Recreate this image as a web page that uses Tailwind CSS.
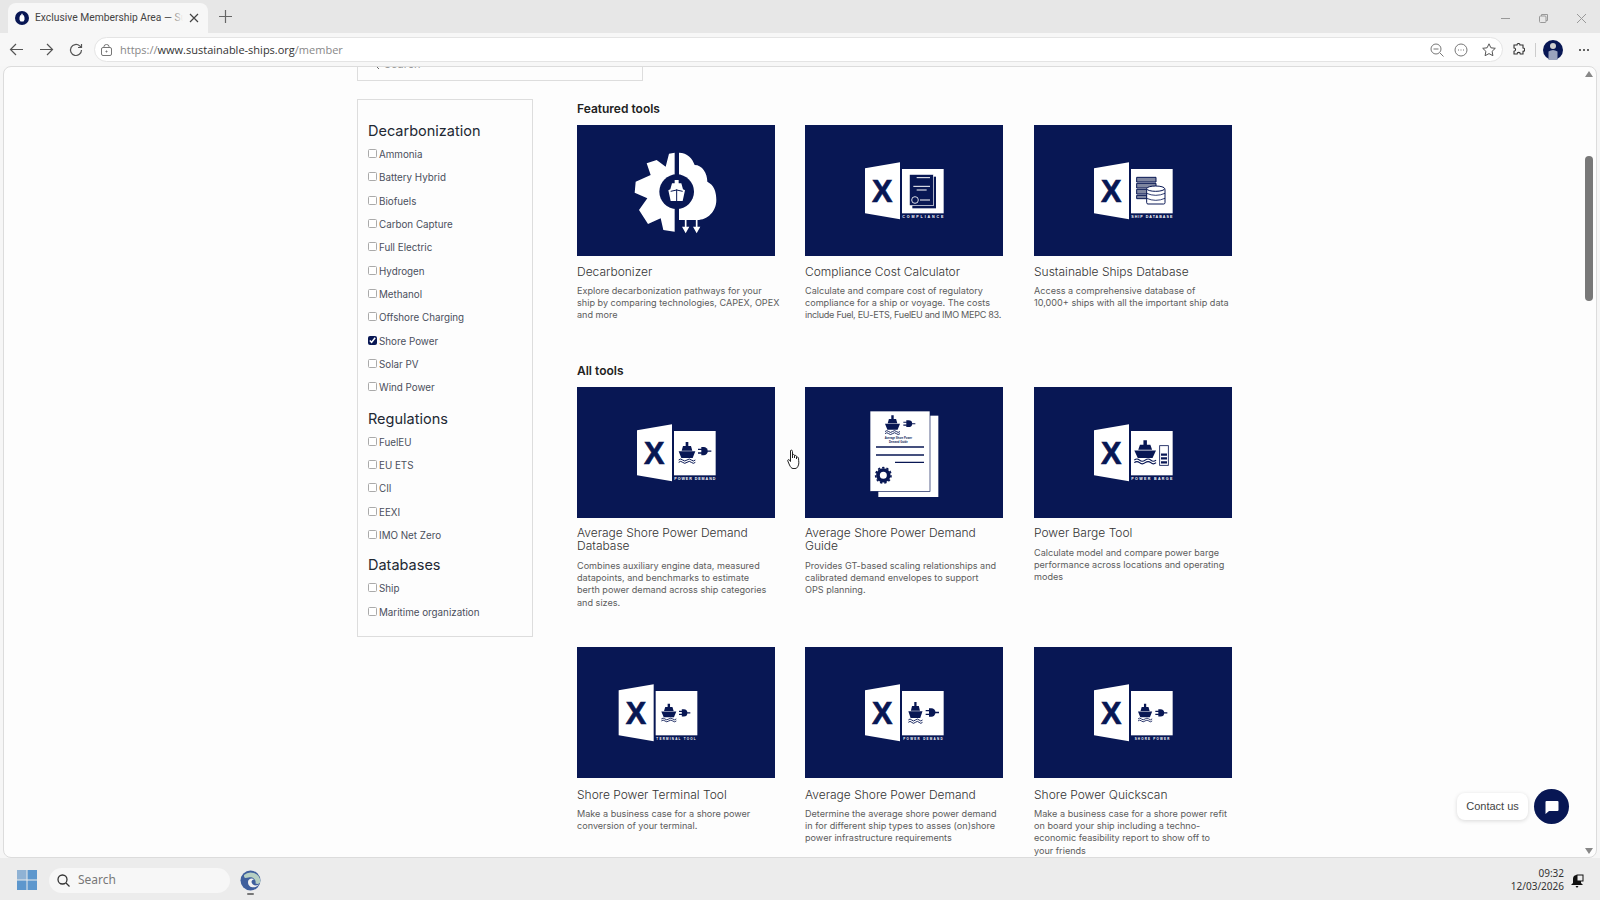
<!DOCTYPE html>
<html lang="en">
<head>
  <meta charset="UTF-8">
  <meta name="viewport" content="width=device-width, initial-scale=1.0">
  <title>Exclusive Membership Area</title>
  <script src="https://cdn.jsdelivr.net/npm/@tailwindcss/browser@4"></script>
</head>
<body class="w-[1600px] h-[900px] overflow-hidden bg-[#f6f6f6] font-['Open_Sans',sans-serif]">

  <!-- shared artwork for the tool tiles -->
  <svg class="hidden" width="0" height="0">
    <defs>
      <g id="xl">
        <path fill="#fff" d="M180 130 285 112V283L180 265Z"/>
        <rect fill="#fff" x="291" y="132" width="125" height="133"/>
        <text x="232" y="231" text-anchor="middle" font-family="Liberation Sans" font-weight="700" font-size="92" fill="#081754" stroke="#081754" stroke-width="2">X</text>
      </g>
      <g id="ship">
        <path fill="currentColor" d="M21 0h8v12h-8zM13 12h24l4 14H9zM0 28h50l-8 20H8z"/>
        <path fill="none" stroke="currentColor" stroke-width="3" d="M0 54q6-6 12 0t13 0 13 0 12 0M0 61q6-6 12 0t13 0 13 0 12 0"/>
      </g>
      <g id="plug">
        <path fill="none" stroke="currentColor" stroke-width="4" d="M0 7h12M0 18h12M28 12.500h12"/>
        <path fill="currentColor" d="M10 0h7a12.500 12.500 0 0 1 0 25h-7z"/>
      </g>
    </defs>
  </svg>

  <div class="flex flex-col h-[900px]">

    <!-- Tab strip -->
    <div class="h-[33px] bg-[#e7e7e7] flex items-end relative shrink-0">
      <div class="ml-[8px] w-[200px] h-[30px] bg-[#f7f7f7] rounded-t-lg flex items-center pl-[7px] pr-[9px] gap-[6px]">
        <svg class="w-[14px] h-[14px] shrink-0" viewBox="0 0 14 14"><circle cx="7" cy="7" r="7" fill="#081754"/><path fill="#fff" d="M6.300 2.800h1.400v1.400h1.100l.7 2.200v2.300l-1 1.800H5.500l-1-1.800V6.400l.7-2.200h1.100z"/></svg>
        <div class="relative w-[151px] overflow-hidden whitespace-nowrap font-['Roboto',sans-serif] text-[10.300px] leading-[16px] text-[#444]">Exclusive Membership Area — Sustainable Ships
          <div class="absolute inset-y-0 right-0 w-[14px] bg-gradient-to-r from-[#f7f7f7]/0 to-[#f7f7f7]"></div>
        </div>
        <svg class="w-[10px] h-[10px] shrink-0" viewBox="0 0 10 10" fill="none" stroke="#444" stroke-width="1.200"><path d="M1 1l8 8M9 1l-8 8"/></svg>
      </div>
      <svg class="w-[13px] h-[13px] ml-[11px] mb-[10px]" viewBox="0 0 13 13" fill="none" stroke="#666" stroke-width="1.200"><path d="M6.500 0v13M0 6.500h13"/></svg>
      <div class="ml-auto flex items-center gap-[29px] pr-[14px] mb-[10px]">
        <svg class="w-[9px] h-[9px]" viewBox="0 0 9 9" stroke="#999" fill="none"><path d="M0 4.500h9"/></svg>
        <svg class="w-[9px] h-[9px]" viewBox="0 0 9 9" stroke="#999" fill="none"><rect x=".5" y="2" width="6.500" height="6.500" rx="1"/><path d="M2.500 2V.5h6v6H7"/></svg>
        <svg class="w-[9px] h-[9px]" viewBox="0 0 9 9" stroke="#999" fill="none"><path d="M0 0l9 9M9 0L0 9"/></svg>
      </div>
    </div>

    <!-- Address bar row -->
    <div class="h-[33px] flex items-center shrink-0 bg-[#f7f7f7]">
      <svg class="w-[15px] h-[15px] ml-[9px]" viewBox="0 0 15 15" fill="none" stroke="#555" stroke-width="1.200"><path d="M14 7.500H1.500M7 2 1.500 7.500 7 13"/></svg>
      <svg class="w-[15px] h-[15px] ml-[15px]" viewBox="0 0 15 15" fill="none" stroke="#555" stroke-width="1.200"><path d="M1 7.500h12.500M8 2l5.500 5.500L8 13"/></svg>
      <svg class="w-[14px] h-[14px] ml-[15px]" viewBox="0 0 14 14" fill="none" stroke="#555" stroke-width="1.200"><path d="M12.500 7A5.500 5.500 0 1 1 10.700 2.900L12.500 4.500M12.500 1v3.500H9"/></svg>
      <div class="ml-[11px] w-[1409px] h-[25px] bg-white rounded-full border border-[#e4e4e4] flex items-center pl-[6px] pr-[6px]">
        <svg class="w-[11px] h-[12px] shrink-0" viewBox="0 0 11 12" fill="none" stroke="#777"><rect x=".5" y="3.500" width="10" height="8" rx="1.500"/><path d="M3 3.500V2.500a2.500 2 0 0 1 5 0v1"/><circle cx="5.500" cy="7.500" r=".6" fill="#777"/></svg>
        <div class="ml-[8px] text-[11px] leading-[16px] text-[#888] whitespace-nowrap">https://<span class="text-[#333]">www.sustainable-ships.org</span>/member</div>
        <div class="ml-auto flex items-center">
          <svg class="w-[14px] h-[14px]" viewBox="0 0 14 14" fill="none" stroke="#777"><circle cx="6" cy="6" r="5"/><path d="M3.500 6h5M10 10l3.500 3.500"/></svg>
          <svg class="w-[14px] h-[14px] ml-[10px]" viewBox="0 0 14 14" fill="none" stroke="#777"><circle cx="7" cy="7" r="6"/><path d="M4 7h1M6.500 7h1M9 7h1"/></svg>
          <svg class="w-[14px] h-[14px] ml-[14px]" viewBox="0 0 14 14" fill="none" stroke="#555"><path d="M7 .8l1.900 4 4.400.5-3.200 3 .8 4.400L7 10.600l-3.900 2.100.8-4.400-3.200-3 4.400-.5z"/></svg>
        </div>
      </div>
      <svg class="w-[13px] h-[13px] ml-[9px]" viewBox="0 0 13 13" fill="none" stroke="#333" stroke-width="1.100"><path d="M5 2a1.500 1.500 0 0 1 3 0h3v3a1.700 1.700 0 0 1 0 3.400V11H8.300a1.600 1.600 0 0 0-3.200 0H2V8.200a1.600 1.600 0 0 0 0-3.200V2z"/></svg>
      <div class="ml-[10px] w-px h-[14px] bg-[#ccc]"></div>
      <svg class="w-[20px] h-[20px] ml-[7px]" viewBox="0 0 20 20"><circle cx="10" cy="10" r="10" fill="#081754"/><circle cx="10" cy="6" r="3" fill="#cfcfcf"/><path fill="#9aa3bd" d="M5.500 20V11.500q4.500-3 9 0V20z"/></svg>
      <div class="ml-[16px] flex gap-[2px]">
        <div class="w-[2px] h-[2px] rounded-full bg-[#333]"></div><div class="w-[2px] h-[2px] rounded-full bg-[#333]"></div><div class="w-[2px] h-[2px] rounded-full bg-[#333]"></div>
      </div>
    </div>

    <!-- Page viewport -->
    <div class="h-[792px] shrink-0 mx-[3px] flex border border-[#dcdcdc] rounded-lg bg-[#fdfdfd] overflow-hidden relative font-['Inter',sans-serif]">
      <div class="flex-1 overflow-hidden pl-[353px]">
        <div class="-mt-[20px] w-[286px] h-[34px] border border-[#ddd] flex items-center pl-[12px] gap-[5px] text-[11px] text-[#999]">
          <svg class="w-[9px] h-[9px]" viewBox="0 0 9 9" fill="none" stroke="#666"><circle cx="3.500" cy="3.500" r="3"/><path d="M6 6l3 3"/></svg>
          Search
        </div>

        <div class="flex mt-[18px] items-start">
          <!-- Filters -->
          <div class="w-[176px] h-[538px] shrink-0 border border-[#ddd] pl-[10px] pt-[22px] text-[#4a4f5c]">
            <h2 class="text-[14.500px] leading-[18px] text-[#222833]">Decarbonization</h2>
            <div class="mt-[3px] flex flex-col text-[9.800px] leading-[23.330px]">
              <label class="flex items-center gap-[2px]"><input type="checkbox" class="appearance-none w-[9px] h-[9px] mb-[2px] bg-white border border-[#aaa] rounded-[1.500px]">Ammonia</label>
              <label class="flex items-center gap-[2px]"><input type="checkbox" class="appearance-none w-[9px] h-[9px] mb-[2px] bg-white border border-[#aaa] rounded-[1.500px]">Battery Hybrid</label>
              <label class="flex items-center gap-[2px]"><input type="checkbox" class="appearance-none w-[9px] h-[9px] mb-[2px] bg-white border border-[#aaa] rounded-[1.500px]">Biofuels</label>
              <label class="flex items-center gap-[2px]"><input type="checkbox" class="appearance-none w-[9px] h-[9px] mb-[2px] bg-white border border-[#aaa] rounded-[1.500px]">Carbon Capture</label>
              <label class="flex items-center gap-[2px]"><input type="checkbox" class="appearance-none w-[9px] h-[9px] mb-[2px] bg-white border border-[#aaa] rounded-[1.500px]">Full Electric</label>
              <label class="flex items-center gap-[2px]"><input type="checkbox" class="appearance-none w-[9px] h-[9px] mb-[2px] bg-white border border-[#aaa] rounded-[1.500px]">Hydrogen</label>
              <label class="flex items-center gap-[2px]"><input type="checkbox" class="appearance-none w-[9px] h-[9px] mb-[2px] bg-white border border-[#aaa] rounded-[1.500px]">Methanol</label>
              <label class="flex items-center gap-[2px]"><input type="checkbox" class="appearance-none w-[9px] h-[9px] mb-[2px] bg-white border border-[#aaa] rounded-[1.500px]">Offshore Charging</label>
              <label class="flex items-center gap-[2px]"><input type="checkbox" checked class="w-[9px] h-[9px] m-0 mb-[2px] accent-[#081754]">Shore Power</label>
              <label class="flex items-center gap-[2px]"><input type="checkbox" class="appearance-none w-[9px] h-[9px] mb-[2px] bg-white border border-[#aaa] rounded-[1.500px]">Solar PV</label>
              <label class="flex items-center gap-[2px]"><input type="checkbox" class="appearance-none w-[9px] h-[9px] mb-[2px] bg-white border border-[#aaa] rounded-[1.500px]">Wind Power</label>
            </div>
            <h2 class="mt-[10px] text-[14.500px] leading-[18px] text-[#222833]">Regulations</h2>
            <div class="mt-[3px] flex flex-col text-[9.800px] leading-[23.330px]">
              <label class="flex items-center gap-[2px]"><input type="checkbox" class="appearance-none w-[9px] h-[9px] mb-[2px] bg-white border border-[#aaa] rounded-[1.500px]">FuelEU</label>
              <label class="flex items-center gap-[2px]"><input type="checkbox" class="appearance-none w-[9px] h-[9px] mb-[2px] bg-white border border-[#aaa] rounded-[1.500px]">EU ETS</label>
              <label class="flex items-center gap-[2px]"><input type="checkbox" class="appearance-none w-[9px] h-[9px] mb-[2px] bg-white border border-[#aaa] rounded-[1.500px]">CII</label>
              <label class="flex items-center gap-[2px]"><input type="checkbox" class="appearance-none w-[9px] h-[9px] mb-[2px] bg-white border border-[#aaa] rounded-[1.500px]">EEXI</label>
              <label class="flex items-center gap-[2px]"><input type="checkbox" class="appearance-none w-[9px] h-[9px] mb-[2px] bg-white border border-[#aaa] rounded-[1.500px]">IMO Net Zero</label>
            </div>
            <h2 class="mt-[9px] text-[14.500px] leading-[18px] text-[#222833]">Databases</h2>
            <div class="mt-[3px] flex flex-col text-[9.800px] leading-[23.330px]">
              <label class="flex items-center gap-[2px]"><input type="checkbox" class="appearance-none w-[9px] h-[9px] mb-[2px] bg-white border border-[#aaa] rounded-[1.500px]">Ship</label>
              <label class="flex items-center gap-[2px]"><input type="checkbox" class="appearance-none w-[9px] h-[9px] mb-[2px] bg-white border border-[#aaa] rounded-[1.500px]">Maritime organization</label>
            </div>
          </div>

          <!-- Tools -->
          <div class="ml-[44px] w-[656px] pt-[1px]">
            <h3 class="text-[12px] leading-[18px] font-semibold text-[#222]">Featured tools</h3>
            <div class="mt-[7px] grid grid-cols-[198px_199px_198px] gap-x-[30px] h-[196px] mb-[41px]">
              <div>
                <svg class="w-[198px] h-[131px] bg-[#081754] block" viewBox="20 15 592 393">
                  <path fill="#fff" d="M312 98 295 101 285 140 258 120 228 130 240 165 195 185 192 218 230 235 205 270 232 312 270 295 278 330 312 335Z"/>
                  <path fill="#fff" d="M325 98C350 98 365 115 372 135 395 135 410 160 410 185 430 195 437 215 437 240 437 275 410 300 380 300H325Z"/>
                  <circle cx="318" cy="215" r="52" fill="#081754"/>
                  <path fill="#fff" d="M312 180h12v10h8l5 18 6 3-7 32h-36l-7-32 6-3 5-18h8z"/>
                  <path fill="none" stroke="#081754" stroke-width="3" d="M300 214q18-8 36 0M318 208V243"/>
                  <path fill="none" stroke="#fff" stroke-width="5" d="M345 298V325M378 298V325"/>
                  <path fill="#fff" d="M334 320h22l-11 20zM367 320h22l-11 20z"/>
                </svg>
                <h4 class="mt-[9px] text-[12px] font-light leading-[13px] text-[#333]">Decarbonizer</h4>
                <p class="mt-[7px] text-[9.100px] leading-[12px] whitespace-nowrap text-[#5c5c5c]">Explore decarbonization pathways for your<br>ship by comparing technologies, CAPEX, OPEX<br>and more</p>
              </div>
              <div>
                <svg class="w-[198px] h-[131px] bg-[#081754] block" viewBox="0 0 594 393">
                  <use href="#xl"/>
                  <rect x="322" y="155" width="71" height="95" fill="#081754"/>
                  <rect x="313" y="148" width="72" height="94" fill="#081754" stroke="#fff" stroke-width="2"/>
                  <path stroke="#fff" stroke-width="3" fill="none" d="M335 158h40M325 184h50M335 195h30M345 225h30"/>
                  <circle cx="330" cy="225" r="10" fill="none" stroke="#fff" stroke-width="2.500"/>
                  <text x="292" y="280" textLength="123" font-family="Liberation Sans" font-weight="700" font-size="11" fill="#fff">COMPLIANCE</text>
                </svg>
                <h4 class="mt-[9px] text-[12px] font-light leading-[13px] text-[#333]">Compliance Cost Calculator</h4>
                <p class="mt-[7px] text-[9.100px] leading-[12px] whitespace-nowrap text-[#5c5c5c]">Calculate and compare cost of regulatory<br>compliance for a ship or voyage. The costs<br><span class="tracking-[-0.3px]">include Fuel, EU-ETS, FuelEU and IMO MEPC 83.</span></p>
              </div>
              <div>
                <svg class="w-[198px] h-[131px] bg-[#081754] block" viewBox="0 0 594 393">
                  <use href="#xl"/>
                  <path fill="#7f86a0" stroke="#081754" stroke-width="3" d="M308 157h58v14h-58zM308 175h58v14h-58zM308 193h40v14h-40zM308 211h30v10h-30z"/>
                  <rect x="338" y="190" width="55" height="47" rx="4" fill="#fff" stroke="#081754" stroke-width="3"/>
                  <ellipse cx="365" cy="191" rx="27" ry="8" fill="#fff" stroke="#081754" stroke-width="3"/>
                  <path stroke="#081754" stroke-width="2.500" fill="none" d="M338 205q27 12 55 0M338 220q27 12 55 0"/>
                  <text x="292" y="280" textLength="123" font-family="Liberation Sans" font-weight="700" font-size="11" fill="#fff">SHIP DATABASE</text>
                </svg>
                <h4 class="mt-[9px] text-[12px] font-light leading-[13px] text-[#333]">Sustainable Ships Database</h4>
                <p class="mt-[7px] text-[9.100px] leading-[12px] whitespace-nowrap text-[#5c5c5c]">Access a comprehensive database of<br>10,000+ ships with all the important ship data</p>
              </div>
            </div>

            <h3 class="text-[12px] leading-[18px] font-semibold text-[#222]">All tools</h3>
            <div class="mt-[7px] grid grid-cols-[198px_199px_198px] gap-x-[30px] gap-y-[39px] grid-rows-[221px_auto]">
              <div>
                <svg class="w-[198px] h-[131px] bg-[#081754] block" viewBox="0 0 594 393">
                  <use href="#xl"/>
                  <use href="#ship" transform="translate(305 165)" class="text-[#081754]"/>
                  <use href="#plug" transform="translate(363 180)" class="text-[#081754]"/>
                  <text x="292" y="280" textLength="123" font-family="Liberation Sans" font-weight="700" font-size="11" fill="#fff">POWER DEMAND</text>
                </svg>
                <h4 class="mt-[8px] text-[12px] font-light leading-[13px] text-[#333]">Average Shore Power Demand<br>Database</h4>
                <p class="mt-[8px] text-[9.100px] leading-[12.200px] whitespace-nowrap text-[#5c5c5c]">Combines auxiliary engine data, measured<br>datapoints, and benchmarks to estimate<br>berth power demand across ship categories<br>and sizes.</p>
              </div>
              <div>
                <svg class="w-[198px] h-[131px] bg-[#081754] block" viewBox="0 0 594 393">
                  <rect x="220" y="86" width="180" height="244" fill="#fff"/>
                  <rect x="195" y="72" width="180" height="241" fill="#fff" stroke="#081754" stroke-width="2"/>
                  <use href="#ship" transform="translate(240 85) scale(.9)" class="text-[#081754]"/>
                  <use href="#plug" transform="translate(295 100) scale(.9 .8)" class="text-[#081754]"/>
                  <text x="280" y="155" text-anchor="middle" font-family="Liberation Sans" font-weight="700" font-size="8" fill="#081754">Average Shore Power</text>
                  <text x="280" y="168" text-anchor="middle" font-family="Liberation Sans" font-weight="700" font-size="8" fill="#081754">Demand Guide</text>
                  <path stroke="#081754" stroke-width="4" d="M213 180H357M213 204H357M270 226H357"/>
                  <circle cx="235" cy="265" r="16" fill="none" stroke="#081754" stroke-width="11"/>
                  <circle cx="235" cy="265" r="23" fill="none" stroke="#081754" stroke-width="5" stroke-dasharray="7 6"/>
                </svg>
                <h4 class="mt-[8px] text-[12px] font-light leading-[13px] text-[#333]">Average Shore Power Demand<br>Guide</h4>
                <p class="mt-[8px] text-[9.100px] leading-[12.200px] whitespace-nowrap text-[#5c5c5c]">Provides GT-based scaling relationships and<br>calibrated demand envelopes to support<br>OPS planning.</p>
              </div>
              <div>
                <svg class="w-[198px] h-[131px] bg-[#081754] block" viewBox="0 0 594 393">
                  <use href="#xl"/>
                  <use href="#ship" transform="translate(301 160) scale(1.300 1.100)" class="text-[#081754]"/>
                  <rect x="377" y="176" width="26" height="59" fill="#fff" stroke="#081754" stroke-width="2.500"/>
                  <path stroke="#081754" stroke-width="7" d="M381 203h18M381 214h18M381 226h18"/>
                  <text x="292" y="280" textLength="123" font-family="Liberation Sans" font-weight="700" font-size="11" fill="#fff">POWER BARGE</text>
                </svg>
                <h4 class="mt-[8px] text-[12px] font-light leading-[13px] text-[#333]">Power Barge Tool</h4>
                <p class="mt-[8px] text-[9.100px] leading-[12.200px] whitespace-nowrap text-[#5c5c5c]">Calculate model and compare power barge<br>performance across locations and operating<br>modes</p>
              </div>
              <div>
                <svg class="w-[198px] h-[131px] bg-[#081754] block" viewBox="0 0 594 393">
                  <use href="#xl" transform="translate(-55 0)"/>
                  <use href="#ship" transform="translate(253 170) scale(.9 .85)" class="text-[#081754]"/>
                  <use href="#plug" transform="translate(306 187) scale(.85)" class="text-[#081754]"/>
                  <text x="238" y="280" textLength="118" font-family="Liberation Sans" font-weight="700" font-size="9" fill="#fff">TERMINAL TOOL</text>
                </svg>
                <h4 class="mt-[10px] text-[12px] font-light leading-[13px] text-[#333]">Shore Power Terminal Tool</h4>
                <p class="mt-[7px] text-[9.100px] leading-[12.200px] whitespace-nowrap text-[#5c5c5c]">Make a business case for a shore power<br>conversion of your terminal.</p>
              </div>
              <div>
                <svg class="w-[198px] h-[131px] bg-[#081754] block" viewBox="0 0 594 393">
                  <use href="#xl"/>
                  <use href="#ship" transform="translate(310 165) scale(.85 1)" class="text-[#081754]"/>
                  <use href="#plug" transform="translate(362 184)" class="text-[#081754]"/>
                  <text x="295" y="280" textLength="118" font-family="Liberation Sans" font-weight="700" font-size="9" fill="#fff">POWER DEMAND</text>
                </svg>
                <h4 class="mt-[10px] text-[12px] font-light leading-[13px] text-[#333]">Average Shore Power Demand</h4>
                <p class="mt-[7px] text-[9.100px] leading-[12.200px] whitespace-nowrap text-[#5c5c5c]">Determine the average shore power demand<br>in for different ship types to asses (on)shore<br>power infrastructure requirements</p>
              </div>
              <div>
                <svg class="w-[198px] h-[131px] bg-[#081754] block" viewBox="0 0 594 393">
                  <use href="#xl"/>
                  <use href="#ship" transform="translate(312 170) scale(.85)" class="text-[#081754]"/>
                  <use href="#plug" transform="translate(364 187) scale(.9 .85)" class="text-[#081754]"/>
                  <text x="302" y="280" textLength="104" font-family="Liberation Sans" font-weight="700" font-size="9" fill="#fff">SHORE POWER</text>
                </svg>
                <h4 class="mt-[10px] text-[12px] font-light leading-[13px] text-[#333]">Shore Power Quickscan</h4>
                <p class="mt-[7px] text-[9.100px] leading-[12.200px] whitespace-nowrap text-[#5c5c5c]">Make a business case for a shore power refit<br>on board your ship including a techno-<br>economic feasibility report to show off to<br>your friends</p>
              </div>
            </div>
          </div>
        </div>
      </div>

      <!-- Scrollbar -->
      <div class="w-[14px] shrink-0 relative flex flex-col items-center">
        <div class="mt-[4px] w-0 h-0 border-x-[4px] border-x-transparent border-b-[6px] border-b-[#888]"></div>
        <div class="mt-[79px] w-[8px] h-[145px] rounded-[4px] bg-[#787878]"></div>
        <div class="mt-auto mb-[3px] w-0 h-0 border-x-[4px] border-x-transparent border-t-[6px] border-t-[#888]"></div>
      </div>

      <!-- Contact widget -->
      <div class="absolute right-[27px] bottom-[33px] flex items-center gap-[6px] font-['Liberation_Sans',sans-serif]">
        <div class="h-[27px] w-[71px] rounded-lg bg-white shadow-[0_1px_4px_rgba(0,0,0,0.15)] text-[11px] leading-[27px] text-center text-[#444]">Contact us</div>
        <div class="w-[35px] h-[35px] rounded-full bg-[#081754] flex items-center justify-center">
          <svg class="w-[14px] h-[14px]" viewBox="0 0 14 14"><path fill="#fff" d="M1.500 1h11a1 1 0 0 1 1 1v8a1 1 0 0 1-1 1H4l-3.500 3V2a1 1 0 0 1 1-1z"/></svg>
        </div>
      </div>
    </div>

    <!-- Taskbar -->
    <div class="h-[42px] shrink-0 bg-[#ececec] flex items-center relative pt-[2px]">
      <svg class="w-[20px] h-[20px] ml-[17px]" viewBox="0 0 20 20"><path fill="#8fb2d4" d="M0 0h9.500v9.500H0z"/><path fill="#5d97cd" d="M10.500 0H20v9.500h-9.500zM0 10.500h9.500V20H0zM10.500 10.500H20V20h-9.500z"/></svg>
      <div class="ml-[12px] w-[181px] h-[25px] rounded-full bg-[#f7f7f7] flex items-center pl-[8px] gap-[8px] text-[12px] text-[#777] font-['Noto_Sans',sans-serif]">
        <svg class="w-[13px] h-[13px]" viewBox="0 0 13 13" fill="none" stroke="#333" stroke-width="1.300"><circle cx="5.500" cy="5.500" r="4.500"/><path d="M9 9l3.500 3.500"/></svg>
        Search
      </div>
      <div class="ml-[10px] relative w-[21px] h-[21px]">
        <svg class="w-[21px] h-[21px]" viewBox="0 0 21 21"><circle cx="10.500" cy="10.500" r="10" fill="#3f5f9d"/><path fill="#b6cfc3" d="M4 5a10 10 0 0 1 16.500 6c0 3-3 3.500-5 2.500 1-4-3-7-7-6S4 8 4 5z"/><path fill="#f2f2f2" d="M8 12c0-3 4-4.500 6-2.500-2.500 0-3.500 3-1 5 2 1.500 5 1 6-.5-2 4.500-11 5-11-2z"/></svg>
        <div class="absolute left-[7px] -bottom-[4px] w-[7px] h-[2px] bg-[#777] rounded-full"></div>
      </div>
      <div class="ml-auto mr-[36px] text-right text-[10px] leading-[13px] text-[#333] font-['Noto_Sans',sans-serif]">
        <div>09:32</div>
        <div>12/03/2026</div>
      </div>
      <svg class="absolute right-[16px] top-[16px] w-[13px] h-[14px]" viewBox="0 0 13 14"><path fill="#111" d="M6 1a4 4 0 0 1 4 4v4l2 2H0l2-2V5a4 4 0 0 1 4-4zM4.500 12h3L6 14z"/><rect x="6" y="1" width="6" height="6" fill="#ececec" stroke="#111"/></svg>
    </div>
  </div>

  <!-- Mouse pointer -->
  <svg class="absolute left-[787px] top-[449px] w-[15px] h-[21px]" viewBox="0 0 15 21"><path fill="#fff" stroke="#222" stroke-width="1" d="M3.500 1.500c1-1 2 0 2 1V9V6c1-1 2-.5 2 .5V9 7c1-1 2-.5 2 .5V10 8.500c1-.8 2-.3 2 .7 0 3 1 5-.5 8-.7 1.500-1.500 2.300-3 2.300H6c-1.500 0-2.500-1.500-3.500-3.500L.8 12c-.5-1 .8-2 1.700-1l1 1.500z"/></svg>

</body>
</html>
